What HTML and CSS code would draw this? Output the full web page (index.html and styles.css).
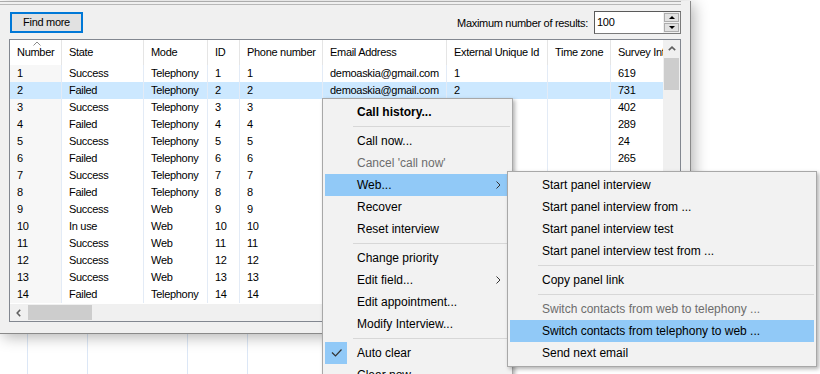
FILE: index.html
```html
<!DOCTYPE html>
<html lang="en">
<head>
    <meta charset="UTF-8">
    <title>Interviews</title>
    <link rel="stylesheet" href="styles.css">
</head>
<body>
<div class="screen">
    <div class="dialog">
        <div class="frame-top"></div>

        <div class="toolbar">
            <button class="btn-default">Find more</button>
            <div class="max-results">
                <label for="maxResults">Maximum number of results:</label>
                <div class="spin">
                    <input id="maxResults" type="text" value="100">
                    <div class="spin-buttons">
                        <span class="spin-btn up"></span>
                        <span class="spin-btn down"></span>
                    </div>
                </div>
            </div>
        </div>

        <div class="listview">
            <div class="list-main">
                <div class="list-body">
                    <div class="row head">
                        <svg class="sort-arrow" width="8" height="5" viewBox="0 0 8 5"><polyline points="0.5,4.5 4,1 7.5,4.5" fill="none" stroke="#8a8a8a" stroke-width="1"/></svg>
                        <div class="cell c-num">Number</div><div class="cell c-state">State</div><div class="cell c-mode">Mode</div><div class="cell c-id">ID</div><div class="cell c-phone">Phone number</div><div class="cell c-email">Email Address</div><div class="cell c-ext">External Unique Id</div><div class="cell c-tz">Time zone</div><div class="cell c-survey">Survey Interview</div>
                    </div>
                    <div class="row"><div class="cell c-num">1</div><div class="cell c-state">Success</div><div class="cell c-mode">Telephony</div><div class="cell c-id">1</div><div class="cell c-phone">1</div><div class="cell c-email">demoaskia@gmail.com</div><div class="cell c-ext">1</div><div class="cell c-tz"></div><div class="cell c-survey">619</div></div>
                    <div class="row selected"><div class="cell c-num">2</div><div class="cell c-state">Failed</div><div class="cell c-mode">Telephony</div><div class="cell c-id">2</div><div class="cell c-phone">2</div><div class="cell c-email">demoaskia@gmail.com</div><div class="cell c-ext">2</div><div class="cell c-tz"></div><div class="cell c-survey">731</div></div>
                    <div class="row"><div class="cell c-num">3</div><div class="cell c-state">Success</div><div class="cell c-mode">Telephony</div><div class="cell c-id">3</div><div class="cell c-phone">3</div><div class="cell c-email">demoaskia@gmail.com</div><div class="cell c-ext">3</div><div class="cell c-tz"></div><div class="cell c-survey">402</div></div>
                    <div class="row"><div class="cell c-num">4</div><div class="cell c-state">Failed</div><div class="cell c-mode">Telephony</div><div class="cell c-id">4</div><div class="cell c-phone">4</div><div class="cell c-email">demoaskia@gmail.com</div><div class="cell c-ext">4</div><div class="cell c-tz"></div><div class="cell c-survey">289</div></div>
                    <div class="row"><div class="cell c-num">5</div><div class="cell c-state">Success</div><div class="cell c-mode">Telephony</div><div class="cell c-id">5</div><div class="cell c-phone">5</div><div class="cell c-email">demoaskia@gmail.com</div><div class="cell c-ext">5</div><div class="cell c-tz"></div><div class="cell c-survey">24</div></div>
                    <div class="row"><div class="cell c-num">6</div><div class="cell c-state">Failed</div><div class="cell c-mode">Telephony</div><div class="cell c-id">6</div><div class="cell c-phone">6</div><div class="cell c-email">demoaskia@gmail.com</div><div class="cell c-ext">6</div><div class="cell c-tz"></div><div class="cell c-survey">265</div></div>
                    <div class="row"><div class="cell c-num">7</div><div class="cell c-state">Success</div><div class="cell c-mode">Telephony</div><div class="cell c-id">7</div><div class="cell c-phone">7</div><div class="cell c-email">demoaskia@gmail.com</div><div class="cell c-ext">7</div><div class="cell c-tz"></div><div class="cell c-survey"></div></div>
                    <div class="row"><div class="cell c-num">8</div><div class="cell c-state">Failed</div><div class="cell c-mode">Telephony</div><div class="cell c-id">8</div><div class="cell c-phone">8</div><div class="cell c-email">demoaskia@gmail.com</div><div class="cell c-ext">8</div><div class="cell c-tz"></div><div class="cell c-survey"></div></div>
                    <div class="row"><div class="cell c-num">9</div><div class="cell c-state">Success</div><div class="cell c-mode">Web</div><div class="cell c-id">9</div><div class="cell c-phone">9</div><div class="cell c-email">demoaskia@gmail.com</div><div class="cell c-ext">9</div><div class="cell c-tz"></div><div class="cell c-survey"></div></div>
                    <div class="row"><div class="cell c-num">10</div><div class="cell c-state">In use</div><div class="cell c-mode">Web</div><div class="cell c-id">10</div><div class="cell c-phone">10</div><div class="cell c-email">demoaskia@gmail.com</div><div class="cell c-ext">10</div><div class="cell c-tz"></div><div class="cell c-survey"></div></div>
                    <div class="row"><div class="cell c-num">11</div><div class="cell c-state">Success</div><div class="cell c-mode">Web</div><div class="cell c-id">11</div><div class="cell c-phone">11</div><div class="cell c-email">demoaskia@gmail.com</div><div class="cell c-ext">11</div><div class="cell c-tz"></div><div class="cell c-survey"></div></div>
                    <div class="row"><div class="cell c-num">12</div><div class="cell c-state">Success</div><div class="cell c-mode">Web</div><div class="cell c-id">12</div><div class="cell c-phone">12</div><div class="cell c-email">demoaskia@gmail.com</div><div class="cell c-ext">12</div><div class="cell c-tz"></div><div class="cell c-survey"></div></div>
                    <div class="row"><div class="cell c-num">13</div><div class="cell c-state">Success</div><div class="cell c-mode">Web</div><div class="cell c-id">13</div><div class="cell c-phone">13</div><div class="cell c-email">demoaskia@gmail.com</div><div class="cell c-ext">13</div><div class="cell c-tz"></div><div class="cell c-survey"></div></div>
                    <div class="row"><div class="cell c-num">14</div><div class="cell c-state">Failed</div><div class="cell c-mode">Telephony</div><div class="cell c-id">14</div><div class="cell c-phone">14</div><div class="cell c-email">demoaskia@gmail.com</div><div class="cell c-ext">14</div><div class="cell c-tz"></div><div class="cell c-survey"></div></div>
                </div>
                <div class="vscroll">
                    <div class="sb-arrow">
                        <svg width="8" height="5" viewBox="0 0 8 5"><polyline points="0.8,4.2 4,1.2 7.2,4.2" fill="none" stroke="#606060" stroke-width="1.6"/></svg>
                    </div>
                    <div class="vs-thumb"></div>
                </div>
            </div>
            <div class="hscroll-row">
                <div class="hscroll">
                    <div class="sb-arrow">
                        <svg width="5" height="8" viewBox="0 0 5 8"><polyline points="4.2,0.8 1.2,4 4.2,7.2" fill="none" stroke="#606060" stroke-width="1.6"/></svg>
                    </div>
                    <div class="hs-thumb"></div>
                </div>
                <div class="corner"></div>
            </div>
        </div>
    </div>

    <!-- list underneath the dialog -->
    <div class="desk">
        <span class="desk-col w28"></span>
        <span class="desk-col w60"></span>
        <span class="desk-col w100"></span>
        <span class="desk-col w60"></span>
    </div>

    <!-- context menu -->
    <div class="menu context">
        <div class="menu-item bold"><span class="mi-icon"></span><span class="mi-label">Call history...</span></div>
        <div class="menu-sep"></div>
        <div class="menu-item"><span class="mi-icon"></span><span class="mi-label">Call now...</span></div>
        <div class="menu-item disabled"><span class="mi-icon"></span><span class="mi-label">Cancel 'call now'</span></div>
        <div class="menu-item active"><span class="mi-icon"></span><span class="mi-label">Web...</span>
            <svg class="mi-arrow" width="5" height="8" viewBox="0 0 5 8"><polyline points="0.5,0.5 4,4 0.5,7.5" fill="none" stroke="#333" stroke-width="1"/></svg></div>
        <div class="menu-item"><span class="mi-icon"></span><span class="mi-label">Recover</span></div>
        <div class="menu-item"><span class="mi-icon"></span><span class="mi-label">Reset interview</span></div>
        <div class="menu-sep"></div>
        <div class="menu-item"><span class="mi-icon"></span><span class="mi-label">Change priority</span></div>
        <div class="menu-item"><span class="mi-icon"></span><span class="mi-label">Edit field...</span>
            <svg class="mi-arrow" width="5" height="8" viewBox="0 0 5 8"><polyline points="0.5,0.5 4,4 0.5,7.5" fill="none" stroke="#333" stroke-width="1"/></svg></div>
        <div class="menu-item"><span class="mi-icon"></span><span class="mi-label">Edit appointment...</span></div>
        <div class="menu-item"><span class="mi-icon"></span><span class="mi-label">Modify Interview...</span></div>
        <div class="menu-sep"></div>
        <div class="menu-item"><span class="mi-icon checked">
            <svg width="22" height="22" viewBox="0 0 22 22"><polyline points="7,10.5 10.5,14 16.5,7.5" fill="none" stroke="#333" stroke-width="1.2"/></svg></span><span class="mi-label">Auto clear</span></div>
        <div class="menu-item"><span class="mi-icon"></span><span class="mi-label">Clear now</span></div>
        <div class="menu-item"><span class="mi-icon"></span><span class="mi-label">Delete</span></div>
    </div>

    <!-- Web... submenu -->
    <div class="menu submenu">
        <div class="menu-item"><span class="mi-icon"></span><span class="mi-label">Start panel interview</span></div>
        <div class="menu-item"><span class="mi-icon"></span><span class="mi-label">Start panel interview from ...</span></div>
        <div class="menu-item"><span class="mi-icon"></span><span class="mi-label">Start panel interview test</span></div>
        <div class="menu-item"><span class="mi-icon"></span><span class="mi-label">Start panel interview test from ...</span></div>
        <div class="menu-sep"></div>
        <div class="menu-item"><span class="mi-icon"></span><span class="mi-label">Copy panel link</span></div>
        <div class="menu-sep"></div>
        <div class="menu-item disabled"><span class="mi-icon"></span><span class="mi-label">Switch contacts from web to telephony ...</span></div>
        <div class="menu-item active"><span class="mi-icon"></span><span class="mi-label">Switch contacts from telephony to web ...</span></div>
        <div class="menu-item"><span class="mi-icon"></span><span class="mi-label">Send next email</span></div>
    </div>
</div>
</body>
</html>
```

FILE: styles.css
```css
* {
    box-sizing: border-box;
}
body {
    margin: 0;
    background-color: #fff;
    color: #000;
    font-family: "Liberation Sans", Arial, sans-serif;
}
.screen {
    position: relative;
    width: 820px;
    height: 374px;
    overflow: hidden;
}

/* dialog window */
.dialog {
    position: relative;
    z-index: 1;
    width: 691px;
    height: 333px;
    background-color: #f0f0f0;
    border-right: 1px solid #8a8a8a;
    border-bottom: 1px solid #8a8a8a;
    box-shadow: 3px 3px 14px rgba(0,0,0,0.3);
    font-size: 11px;
    letter-spacing: -0.3px;
}
.frame-top {
    width: 681px;
    height: 4px;
    margin-top: 1px;
    border-top: 1px solid #acacac;
    border-bottom: 1px solid #b8b8b8;
}
.toolbar {
    display: flex;
    align-items: center;
    justify-content: space-between;
    height: 34px;
    padding: 0 9px 0 10px;
}
.btn-default {
    width: 73px;
    height: 21px;
    padding: 0;
    border: 2px solid #0078d7;
    background-color: #e1e1e1;
    color: #000;
    font-family: "Liberation Sans", Arial, sans-serif;
    font-size: 11px;
    letter-spacing: -0.3px;
}
.max-results {
    display: flex;
    align-items: center;
}
.max-results label {
    margin-right: 6px;
    padding-top: 1px;
}
.spin {
    display: flex;
    width: 87px;
    height: 23px;
    border: 1px solid #7a7a7a;
    border-top-color: #5a5a5a;
    border-left-color: #5a5a5a;
    background-color: #fff;
}
.spin input {
    width: 68px;
    height: 18px;
    border: 0;
    padding: 2px 0 0 2px;
    background: transparent;
    outline: none;
    font-family: "Liberation Sans", Arial, sans-serif;
    font-size: 11px;
    letter-spacing: -0.3px;
    color: #000;
}
.spin-buttons {
    display: flex;
    flex-direction: column;
    gap: 1px;
    width: 17px;
    padding: 1px;
    background-color: #f0f0f0;
}
.spin-btn {
    flex: 1;
    display: flex;
    align-items: center;
    justify-content: center;
    border: 1px solid #adadad;
    background-color: #e1e1e1;
}
.spin-btn::before {
    content: "";
    border-left: 3px solid transparent;
    border-right: 3px solid transparent;
}
.spin-btn.up::before {
    border-bottom: 3px solid #000;
}
.spin-btn.down::before {
    border-top: 3px solid #000;
}

/* list view */
.listview {
    margin-left: 9px;
    width: 672px;
    height: 283px;
    border: 1px solid #828790;
    background-color: #fff;
}
.list-main {
    display: flex;
    height: 264px;
}
.list-body {
    width: 653px;
    overflow: hidden;
}
.row {
    display: flex;
    width: 680px;
    height: 17px;
    line-height: 17px;
    white-space: nowrap;
}
.row.head {
    position: relative;
    height: 25px;
    line-height: 25px;
}
.sort-arrow {
    position: absolute;
    left: 23px;
    top: 1px;
}
.cell {
    flex: none;
    padding-left: 7px;
    border-right: 1px solid #e3ebf6;
    overflow: hidden;
}
.head .cell {
    border-right-color: #e5e5e5;
}
.row .c-num {
    background-color: #f7f7f7;
}
.head .c-num {
    background-color: #fff;
}
.row.selected {
    background-color: #cce8ff;
}
.row.selected .c-num {
    background-color: transparent;
}
.c-num { width: 52px; }
.c-state { width: 82px; }
.c-mode { width: 64px; }
.c-id { width: 32px; }
.c-phone { width: 83px; }
.c-email { width: 124px; }
.c-ext { width: 101px; }
.c-tz { width: 63px; }
.c-survey { width: 79px; border-right: 0; }

.vscroll {
    display: flex;
    flex-direction: column;
    align-items: center;
    width: 17px;
    background-color: #f0f0f0;
}
.sb-arrow {
    display: flex;
    align-items: center;
    justify-content: center;
    flex: none;
    width: 17px;
    height: 17px;
}
.vs-thumb {
    width: 15px;
    height: 32px;
    margin-top: 1px;
    background-color: #cdcdcd;
}
.hscroll-row {
    display: flex;
    height: 17px;
}
.hscroll {
    display: flex;
    align-items: center;
    width: 653px;
    background-color: #f0f0f0;
}
.hs-thumb {
    width: 64px;
    height: 15px;
    margin-left: 1px;
    background-color: #cdcdcd;
}
.corner {
    width: 17px;
    background-color: #f0f0f0;
}

/* whatever lies below the dialog */
.desk {
    display: flex;
    height: 41px;
}
.desk-col {
    flex: none;
    height: 100%;
    border-right: 1px solid #dce7f6;
}
.w28 { width: 28px; }
.w60 { width: 60px; }
.w100 { width: 100px; }

/* menus */
.menu {
    position: absolute;
    z-index: 2;
    padding: 2px;
    background-color: #f2f2f2;
    border: 1px solid #a8a8a8;
    box-shadow: 2px 2px 4px rgba(0,0,0,0.3);
    font-size: 12px;
    color: #000;
}
.context {
    left: 322px;
    top: 98px;
    width: 191px;
}
.submenu {
    z-index: 3;
    left: 507px;
    top: 171px;
    width: 310px;
}
.menu-item {
    display: flex;
    align-items: center;
    height: 22px;
    white-space: nowrap;
}
.menu-item.bold {
    font-weight: bold;
}
.menu-item.disabled {
    color: #6d6d6d;
}
.menu-item.active {
    background-color: #91c9f7;
}
.mi-icon {
    flex: none;
    width: 22px;
    height: 22px;
}
.mi-icon.checked {
    background-color: #91c9f7;
}
.mi-icon svg {
    display: block;
}
.mi-label {
    flex: 1;
    margin-left: 10px;
}
.mi-arrow {
    flex: none;
    margin-right: 9px;
}
.menu-sep {
    height: 1px;
    margin: 3px 0 3px 28px;
    background-color: #d7d7d7;
}
```
